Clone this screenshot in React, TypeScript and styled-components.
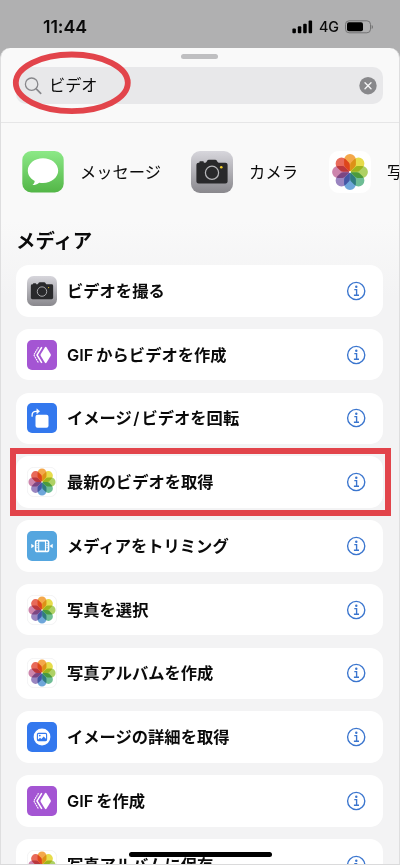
import React from "react";
import styled, { createGlobalStyle } from "styled-components";

const RED = "#e2444b";

const GlobalStyle = createGlobalStyle`
  * { box-sizing: border-box; }
  body {
    margin: 0;
    background: #b0b0b1;
    color: #0a0a0a;
    font-family: Inter, "Noto Sans CJK JP", sans-serif;
    overflow: hidden;
  }
  svg { display: block; flex: none; }
`;

const Screen = styled.div`
  position: relative;
  width: 400px;
  height: 865px;
  overflow: hidden;
  display: flex;
  flex-direction: column;
  background: #b0b0b1;
`;

const StatusBar = styled.header`
  flex: none;
  height: 48px;
  padding: 5px 27px 0 43px;
  display: flex;
  align-items: center;
  justify-content: space-between;
`;

const Clock = styled.span`
  font-size: 17.8px;
  font-weight: 600;
  letter-spacing: -0.1px;
  line-height: 20px;
`;

const StatusIcons = styled.div`
  display: flex;
  align-items: center;
  gap: 6px;
`;

const Network = styled.span`
  font-size: 14.3px;
  font-weight: 500;
  line-height: 14px;
`;

const Sheet = styled.main`
  flex: 1;
  min-height: 0;
  display: flex;
  flex-direction: column;
  overflow: hidden;
  border: 1px solid #dededf;
  border-top: 0;
  border-radius: 10px 10px 0 0;
  background: #f9f9f9;
`;

const SearchArea = styled.div`
  flex: none;
  height: 75px;
  padding: 6px 16px 0 15px;
  border-bottom: 1px solid #e6e6e7;
`;

const Grabber = styled.div`
  width: 37px;
  height: 5px;
  margin: 0 auto 8px;
  border-radius: 3px;
  background: #bfbfc1;
`;

const SearchField = styled.div`
  height: 37px;
  padding: 0 6.5px 0 8px;
  border-radius: 10px;
  display: flex;
  align-items: center;
  background: #e8e8ea;
`;

const Query = styled.span`
  flex: 1;
  margin: 0 0 1px 7px;
  font-size: 16.2px;
  line-height: 24px;
`;

const Suggestions = styled.div`
  flex: none;
  height: 98px;
  padding-left: 21px;
  display: flex;
  align-items: center;
  white-space: nowrap;
`;

const Suggestion = styled.div<{ $gap: number }>`
  flex: none;
  display: flex;
  align-items: center;
  margin-right: ${(p) => p.$gap}px;
`;

const SuggestionName = styled.span`
  margin: 0 0 0 16px;
  font-size: 16.3px;
  line-height: 24px;
`;

const Results = styled.section`
  flex: 1;
  min-height: 0;
  overflow: hidden;
  padding: 6px 16px 0 15px;
  background: linear-gradient(#f9f9f9, #f3f3f4 75px);
`;

const Heading = styled.h2`
  margin: 0 0 10px;
  height: 28px;
  font-size: 19.4px;
  font-weight: 700;
  line-height: 28px;
`;

const List = styled.div`
  display: flex;
  flex-direction: column;
  gap: 12.25px;
`;

const Row = styled.div`
  flex: none;
  height: 51.5px;
  padding: 0 17px 0 11px;
  display: flex;
  align-items: center;
  border-radius: 13px;
  background: #fff;
`;

const RowName = styled.span`
  flex: 1;
  margin-left: 10px;
  font-size: 16.3px;
  font-weight: 600;
  line-height: 24px;
  white-space: nowrap;
`;

const Latin = styled.span`
  margin-right: 3px;
`;

const Slash = styled.span`
  margin: 0 2px 0 1.5px;
`;

const Marker = styled.svg`
  position: absolute;
  inset: 0;
  pointer-events: none;
`;

const HomeIndicator = styled.div`
  position: absolute;
  left: 129px;
  bottom: 8px;
  width: 143px;
  height: 5px;
  border-radius: 3px;
  background: #000;
`;

const BottomEdge = styled.div`
  position: absolute;
  left: 0;
  right: 0;
  bottom: 0;
  height: 1px;
  background: #dadadb;
`;

type IconProps = { size?: number };

const petals = ["#f2992c", "#e3d62c", "#a0c94a", "#55b183", "#5596d3", "#8870b5", "#c4709d", "#e4503c"];

const PetalGroup = styled.g`
  isolation: isolate;
  path { mix-blend-mode: multiply; }
`;

const PhotosIcon = ({ size = 30 }: IconProps) => (
  <svg width={size} height={size} viewBox="0 0 42 42">
    <rect x="0.5" y="0.5" width="41" height="41" rx="9" fill="#fff" stroke={size > 35 ? "#fff" : "#eeeeef"} />
    <PetalGroup transform={size > 35 ? undefined : "translate(21 21) scale(1.06) translate(-21 -21)"}>
      {petals.map((c, i) => (
        <path
          key={c}
          d="M21 20.8 L16.4 16.2 Q15.1 14.9 15.1 13.5 V9 A5.9 5.9 0 0 1 26.9 9 V13.5 Q26.9 14.9 25.6 16.2 Z"
          fill={c}
          fillOpacity="0.85"
          transform={`rotate(${i * 45} 21 21)`}
        />
      ))}
    </PetalGroup>
    <circle cx="21" cy="21" r="1" fill="#fff" />
  </svg>
);

const CameraIcon = ({ size = 30 }: IconProps) => (
  <svg width={size} height={size} viewBox="0 0 42 42">
    <defs>
      <linearGradient id={`steel${size}`} x1="0" y1="0" x2="0" y2="1">
        <stop offset="0" stopColor="#d7d6dc" />
        <stop offset="1" stopColor="#89888d" />
      </linearGradient>
    </defs>
    <rect width="42" height="42" rx="9" fill={`url(#steel${size})`} />
    <path
      d="M8.4 11.7V11Q8.4 10.3 9.2 10.3H12Q12.8 10.3 12.8 11V11.7H14.2Q15 11.7 15.6 10.7L16.1 9.8Q16.7 8.7 17.9 8.7H24.1Q25.3 8.7 25.9 9.8L26.4 10.7Q27 11.7 28 11.7H34.4Q36.6 11.7 36.6 13.7V30.6Q36.6 32.6 34.4 32.6H7.6Q5.4 32.6 5.4 30.6V13.7Q5.4 11.7 7.6 11.7Z"
      fill="#29292b"
    />
    <circle cx="21" cy="21.8" r="6.6" fill="none" stroke="#b6b6b9" strokeWidth="1.25" />
    <circle cx="30.3" cy="16.2" r={size > 35 ? 1.3 : 0.8} fill="#f5cf2b" />
  </svg>
);

const MessagesIcon = () => (
  <svg width="42" height="42" viewBox="0 0 42 42">
    <defs>
      <linearGradient id="mint" x1="0" y1="0" x2="0" y2="1">
        <stop offset="0" stopColor="#8ce987" />
        <stop offset="1" stopColor="#53b647" />
      </linearGradient>
    </defs>
    <rect x="0.3" width="41.4" height="41.4" rx="9" fill="url(#mint)" />
    <path
      d="M21 7.2C12.6 7.2 5.8 12.6 5.8 19.6C5.8 24 8.4 27.8 12.7 30C12.6 31.6 11.8 32.9 10.4 34.1C13 34.1 15.4 33.1 17.2 31.7C18.4 31.9 19.7 32 21 32C29.4 32 36.2 26.5 36.2 19.6C36.2 12.7 29.4 7.2 21 7.2Z"
      fill="#fff"
    />
  </svg>
);

const GifIcon = () => (
  <svg width="30" height="30" viewBox="0 0 30 30">
    <rect width="30" height="30" rx="5" fill="#a455d3" />
    <path d="M18.7 6.8Q19.2 6.8 19.6 7.4L23.7 14.2Q24.1 15 23.7 15.8L19.6 22.6Q19.2 23.2 18.7 23.2T17.8 22.6L13.7 15.8Q13.3 15 13.7 14.2L17.8 7.4Q18.2 6.8 18.7 6.8Z" fill="#fff" />
    <path d="M14.8 7.2L10 15L14.8 22.8" fill="none" stroke="#fff" strokeWidth="1.5" />
    <path d="M11.5 7.2L6.8 15L11.5 22.8" fill="none" stroke="#fff" strokeWidth="1.1" strokeDasharray="1.7 .6" />
  </svg>
);

const RotateIcon = () => (
  <svg width="30" height="30" viewBox="0 0 30 30">
    <rect width="30" height="30" rx="5" fill="#3378ee" />
    <rect x="8.5" y="11.8" width="13" height="13" rx="2" fill="#fff" />
    <path d="M5.1 13.2V12.2Q5.1 8.3 9 8.3H10.6" fill="none" stroke="#fff" strokeWidth="1.3" strokeLinecap="round" />
    <path d="M9.8 5.8L12.6 8.3L9.8 10.8Z" fill="#fff" stroke="#fff" strokeWidth=".5" strokeLinejoin="round" />
  </svg>
);

const TrimIcon = () => (
  <svg width="30" height="30" viewBox="0 0 30 30">
    <rect width="30" height="30" rx="5" fill="#55a6df" />
    <rect x="8.6" y="9.4" width="13" height="11.2" rx="1.9" fill="#55a6df" stroke="#fff" strokeWidth="1.5" />
    <rect x="11.7" y="10" width="6.8" height="10.2" fill="none" stroke="#fff" strokeWidth="1.1" />
    <path d="M10.1 12V18M20.1 12V18" stroke="#fff" strokeWidth="1" strokeDasharray="1.2 .8" />
    <path d="M4.3 12.7V17.3L7.4 15ZM25.7 12.7V17.3L22.6 15Z" fill="#fff" />
  </svg>
);

const ImageDetailIcon = () => (
  <svg width="30" height="30" viewBox="0 0 30 30">
    <rect width="30" height="30" rx="5" fill="#3378ee" />
    <circle cx="15" cy="15" r="8.4" fill="#fff" />
    <rect x="10.4" y="11.4" width="9.2" height="7.2" rx="1.1" fill="none" stroke="#3378ee" strokeWidth="1.1" />
    <circle cx="12.8" cy="13.6" r=".9" fill="#3378ee" />
    <path d="M10.6 18L13 15.8L14.4 17L16.7 14.6L19.4 17.2V18.4H10.6Z" fill="#3378ee" />
  </svg>
);

const InfoIcon = () => (
  <svg width="20" height="20" viewBox="0 0 20 20" fill="none" stroke="#3a75ce">
    <circle cx="10.2" cy="10" r="8.6" strokeWidth="1.35" />
    <path d="M8.3 8.6H10.6V14M7.9 14.2H13" strokeWidth="1.35" />
    <circle cx="10.3" cy="5.7" r="1.2" fill="#3a75ce" stroke="none" />
  </svg>
);

const SearchIcon = () => (
  <svg width="18" height="18" viewBox="0 0 18 18" fill="none" stroke="#87878b" strokeLinecap="round">
    <circle cx="7.6" cy="7.2" r="6.2" strokeWidth="1.3" />
    <path d="M12.2 11.8L16.7 16.3" strokeWidth="1.7" />
  </svg>
);

const ClearIcon = () => (
  <svg width="18" height="18" viewBox="0 0 18 18">
    <circle cx="9" cy="8.7" r="8.7" fill="#88888b" />
    <path d="M6 5.7L12 11.7M12 5.7L6 11.7" stroke="#f3f3f4" strokeWidth="1.4" strokeLinecap="round" />
  </svg>
);

const SignalIcon = () => (
  <svg width="21" height="14" viewBox="0 0 21 14">
    <rect x="0.4" y="8.5" width="3.5" height="4.8" rx="1" />
    <rect x="5.8" y="6.3" width="3.5" height="7" rx="1" />
    <rect x="11.2" y="3.8" width="3.5" height="9.5" rx="1" />
    <rect x="16.6" y="0.6" width="3.5" height="12.7" rx="1" />
  </svg>
);

const BatteryIcon = () => (
  <svg width="28" height="14" viewBox="0 0 28 14">
    <rect x="0.5" y="0.8" width="25" height="12" rx="3.6" fill="none" stroke="#737374" />
    <rect x="2" y="2.3" width="16" height="9" rx="2" />
    <path d="M26.7 5V9Q28 8.4 28 7T26.7 5Z" fill="#737374" />
  </svg>
);

const rows: { key: string; icon: React.ReactNode; name: React.ReactNode }[] = [
  { key: "shoot", icon: <CameraIcon />, name: "ビデオを撮る" },
  { key: "gif-video", icon: <GifIcon />, name: <><Latin>GIF</Latin>からビデオを作成</> },
  { key: "rotate", icon: <RotateIcon />, name: <>イメージ<Slash>/</Slash>ビデオを回転</> },
  { key: "latest", icon: <PhotosIcon />, name: "最新のビデオを取得" },
  { key: "trim", icon: <TrimIcon />, name: "メディアをトリミング" },
  { key: "select", icon: <PhotosIcon />, name: "写真を選択" },
  { key: "album", icon: <PhotosIcon />, name: "写真アルバムを作成" },
  { key: "detail", icon: <ImageDetailIcon />, name: "イメージの詳細を取得" },
  { key: "gif", icon: <GifIcon />, name: <><Latin>GIF</Latin>を作成</> },
  { key: "save", icon: <PhotosIcon />, name: "写真アルバムに保存" },
];

export default function App() {
  return (
    <>
      <GlobalStyle />
      <Screen>
        <StatusBar>
          <Clock>11:44</Clock>
          <StatusIcons>
            <SignalIcon />
            <Network>4G</Network>
            <BatteryIcon />
          </StatusIcons>
        </StatusBar>
        <Sheet>
          <SearchArea>
            <Grabber />
            <SearchField>
              <SearchIcon />
              <Query>ビデオ</Query>
              <ClearIcon />
            </SearchField>
          </SearchArea>
          <Suggestions>
            <Suggestion $gap={30}>
              <MessagesIcon />
              <SuggestionName>メッセージ</SuggestionName>
            </Suggestion>
            <Suggestion $gap={31}>
              <CameraIcon size={42} />
              <SuggestionName>カメラ</SuggestionName>
            </Suggestion>
            <Suggestion $gap={0}>
              <PhotosIcon size={42} />
              <SuggestionName>写真</SuggestionName>
            </Suggestion>
          </Suggestions>
          <Results>
            <Heading>メディア</Heading>
            <List>
              {rows.map((row) => (
                <Row key={row.key}>
                  {row.icon}
                  <RowName>{row.name}</RowName>
                  <InfoIcon />
                </Row>
              ))}
            </List>
          </Results>
        </Sheet>
        <HomeIndicator />
        <BottomEdge />
        <Marker width="400" height="865" viewBox="0 0 400 865" fill="none" stroke={RED}>
          <ellipse cx="71.8" cy="82.8" rx="56" ry="28.3" strokeWidth="5.8" />
          <rect x="13" y="451" width="375" height="62" strokeWidth="6" />
        </Marker>
      </Screen>
    </>
  );
}
